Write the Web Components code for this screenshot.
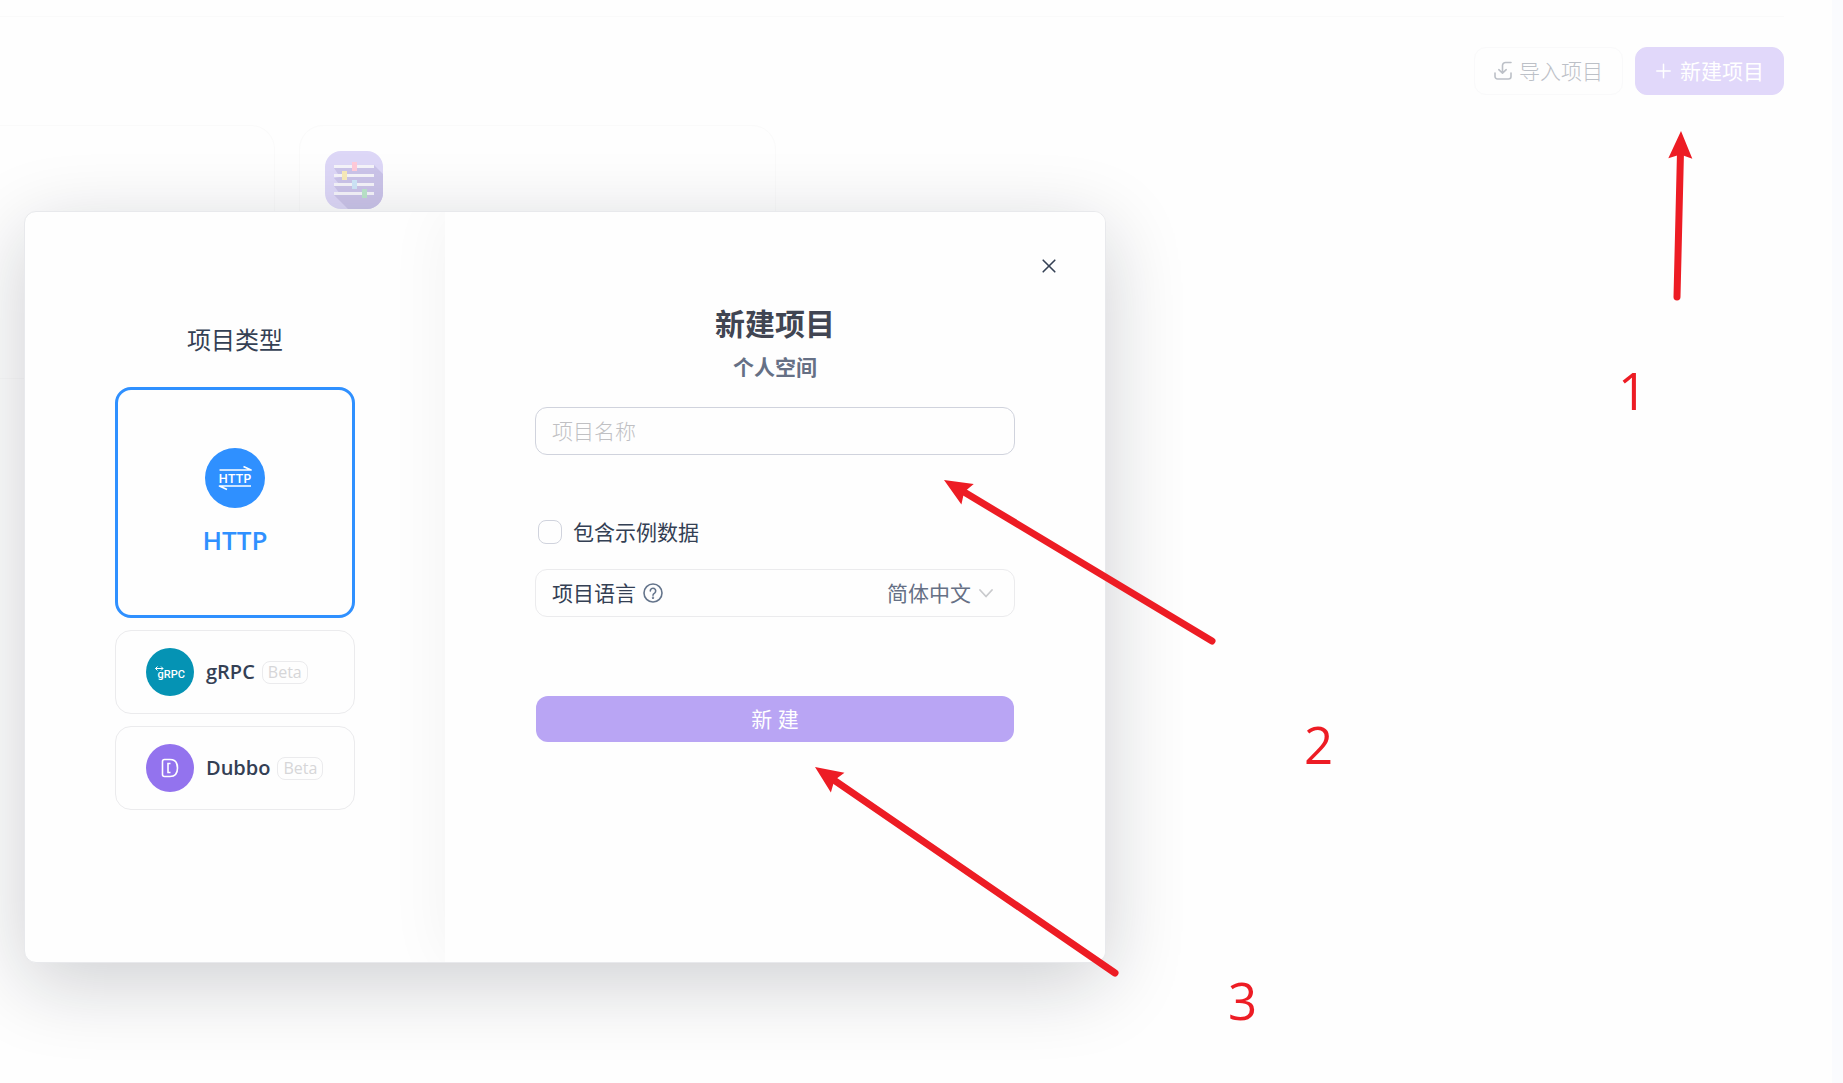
<!DOCTYPE html>
<html lang="zh-CN">
<head>
<meta charset="utf-8">
<title>新建项目</title>
<style>
  body {
    margin: 0;
    min-height: 100vh;
    background: #fefefe;
    color: #344054;
    font: 21px/30px "Open Sans", "Noto Sans CJK SC", sans-serif;
  }
</style>
</head>
<body>
<project-page>
  <tool-button slot="actions" kind="ghost">
    <svg slot="icon" width="18" height="20" viewBox="0 0 18 20" fill="none" stroke="currentColor" stroke-width="1.6" stroke-linecap="round" stroke-linejoin="round">
      <path d="M1 12v3.5A2.5 2.5 0 0 0 3.500 18h11a2.500 2.500 0 0 0 2.500-2.500V12"/>
      <path d="M17 1.500h-5.500a3 3 0 0 0-3 3V12M4.800 8.700l3.700 3.500 3.700-3.500"/>
    </svg>
    导入项目
  </tool-button>
  <tool-button slot="actions" kind="primary">
    <svg slot="icon" width="15" height="20" viewBox="0 0 15 20" fill="none" stroke="currentColor" stroke-width="1.500" stroke-linecap="round">
      <path d="M.8 10h13.400M7.500 3.300v13.400"/>
    </svg>
    新建项目
  </tool-button>
  <project-card></project-card>
  <project-card>
    <svg width="58" height="58" viewBox="0 0 58 58" role="img" aria-label="项目图标">
      <defs><clipPath id="tile"><rect width="58" height="58" rx="16"/></clipPath></defs>
      <g clip-path="url(#tile)">
        <rect width="58" height="58" fill="#ddd7f7"/>
        <path d="M49 14l9 9v35H23L9 44l6-1-6-8 6-1-6-7 6-1-6-9z" fill="#cbc4e9"/>
        <g fill="#f5f4fa">
          <rect x="9" y="14" width="40" height="3"/>
          <rect x="9" y="23" width="40" height="3"/>
          <rect x="9" y="32" width="40" height="3"/>
          <rect x="9" y="41" width="40" height="3"/>
        </g>
        <rect x="27" y="11" width="5" height="9" fill="#ffcad9"/>
        <rect x="17" y="20" width="5" height="9" fill="#f8eab9"/>
        <rect x="27" y="29" width="5" height="9" fill="#cfe6f8"/>
        <rect x="37" y="38" width="5" height="9" fill="#bce6cb"/>
      </g>
    </svg>
  </project-card>

  <new-project-dialog slot="dialog">
    <type-card slot="types" active>
      <svg slot="logo" width="60" height="60" viewBox="0 0 60 60">
        <circle cx="30" cy="30" r="30" fill="#2f90ff"/>
        <path d="M14.500 22h31.500l-7.500-3.500M46 38H14.500l7.500 3.500" fill="none" stroke="#fff" stroke-width="1.700" stroke-linejoin="round"/>
        <text x="30" y="34.500" text-anchor="middle" font-family="Inter" font-size="12" font-weight="600" fill="#fff">HTTP</text>
      </svg>
      HTTP
    </type-card>
    <type-card slot="types" tag="Beta">
      <svg slot="logo" width="48" height="48" viewBox="0 0 48 48">
        <circle cx="24" cy="24" r="24" fill="#0593b4"/>
        <path d="M9.500 20.500h7.500M11.500 18.500l-2 2 2 2M15 18.500l2 2-2 2" fill="none" stroke="#fff"/>
        <text x="11.500" y="30" font-family="Roboto" font-size="11" font-weight="500" fill="#fff">gRPC</text>
      </svg>
      gRPC
    </type-card>
    <type-card slot="types" tag="Beta">
      <svg slot="logo" width="48" height="48" viewBox="0 0 48 48">
        <circle cx="24" cy="24" r="24" fill="#9373ee"/>
        <path d="M18.500 15.500h5.500q7.500 0 7.500 8.500t-7.500 8.500h-5.500q-2 0-2-2v-13q0-2 2-2z" fill="none" stroke="#fff" stroke-width="1.600"/>
        <path d="M24.500 19.500h-2.500v9h2.500" fill="none" stroke="#fff" stroke-width="1.600"/>
      </svg>
      Dubbo
    </type-card>
  </new-project-dialog>

  <step-note slot="notes" tip="1681,131" tail="1677,297" at="1618,355">1</step-note>
  <step-note slot="notes" tip="944,480" tail="1212,641" at="1304,709">2</step-note>
  <step-note slot="notes" tip="815,767" tail="1115,973" at="1228,965">3</step-note>
</project-page>

<script>
/* Small base class: open shadow root with markup from view() */
class BaseElement extends HTMLElement {
  constructor() {
    super()
    this.attachShadow({ mode: 'open' })
  }

  connectedCallback() {
    this.shadowRoot.innerHTML = `
      <style>
        * { box-sizing: border-box; }
        ${this.getStyles()}
      </style>
      ${this.view()}
    `
  }
}

class ProjectPage extends BaseElement {
  view() {
    return `
      <main>
        <div class="toolbar"><slot name="actions"></slot></div>
        <div class="cards"><slot></slot></div>
      </main>
      <aside></aside>
      <div class="layer"><slot name="dialog"></slot></div>
      <slot name="notes"></slot>
    `
  }

  getStyles() {
    return `
      :host {
        display: flex;
        position: relative;
        min-height: 100vh;
        overflow: hidden;
      }

      main {
        flex: 1;
        padding: 16px 48px 0 0;
      }

      aside {
        width: 11px;
        background: #fafbfe;
      }

      .toolbar {
        display: flex;
        justify-content: flex-end;
        gap: 12px;
        padding: 30px 0;
        border-top: 1px solid #fafafa;
      }

      .cards {
        display: grid;
        grid-template-columns: 275px 477px;
        gap: 24px;
      }

      .layer {
        position: absolute;
        inset: 0;
        padding: 211px 24px 0;
      }
    `
  }
}

class ToolButton extends BaseElement {
  view() {
    return `
      <button type="button" class="${this.getAttribute('kind')}">
        <slot name="icon"></slot><span><slot></slot></span>
      </button>
    `
  }

  getStyles() {
    return `
      :host { display: block; }

      button {
        display: flex;
        align-items: center;
        gap: 7px;
        height: 48px;
        padding: 0 19px;
        border: 1px solid #f9f9fa;
        border-radius: 12px;
        background: transparent;
        color: #bcc0c7;
        font: inherit;
        font-weight: 300;
      }

      .primary {
        gap: 9px;
        padding: 0 19px 0 20px;
        border-color: #e1d8fa;
        background: #e1d8fa;
        color: #fff;
        font-weight: 400;
      }
    `
  }
}

class ProjectCard extends BaseElement {
  view() {
    return `<slot></slot>`
  }

  getStyles() {
    return `
      :host {
        display: block;
        box-sizing: border-box;
        height: 254px;
        padding: 25px;
        border: 1px solid #fafafa;
        border-radius: 24px;
      }

      /* the first card runs off the left edge of the window */
      :host(:first-of-type) {
        border-left: 0;
        border-top-left-radius: 0;
        border-bottom-left-radius: 0;
      }
    `
  }
}

class TypeCard extends BaseElement {
  view() {
    const tag = this.getAttribute('tag')
    return `
      <button type="button" aria-pressed="${this.hasAttribute('active')}">
        <slot name="logo"></slot>
        <span class="name"><slot></slot></span>
        ${tag ? `<span class="tag">${tag}</span>` : ''}
      </button>
    `
  }

  getStyles() {
    return `
      :host { display: block; }

      button {
        display: flex;
        align-items: center;
        width: 100%;
        height: 84px;
        padding: 0 30px;
        border: 1px solid #ebebed;
        border-radius: 16px;
        background: #fefefe;
        color: inherit;
        font: inherit;
        font-size: 20px;
        font-weight: 600;
      }

      .name { margin-left: 12px; }

      .tag {
        margin-left: 7px;
        padding: 0 5px;
        border: 1px solid #ebebed;
        border-radius: 8px;
        color: #d6d6d8;
        font-size: 16px;
        font-weight: 400;
        line-height: 21px;
      }

      :host([active]) button {
        flex-direction: column;
        justify-content: center;
        gap: 14px;
        height: 231px;
        border: 3px solid #2f90ff;
        color: #2f90ff;
        font-size: 26px;
        line-height: 36px;
      }

      :host([active]) .name { margin-left: 0; }
    `
  }
}

class NewProjectDialog extends BaseElement {
  view() {
    return `
      <section role="dialog" aria-labelledby="title">
        <div class="types">
          <h3>项目类型</h3>
          <slot name="types"></slot>
        </div>
        <form>
          <button type="button" class="close" aria-label="关闭">
            <svg width="14" height="14" viewBox="0 0 14 14" stroke="currentColor" stroke-width="1.6" stroke-linecap="round">
              <path d="M1.200 1.200l11.600 11.600M12.800 1.200L1.200 12.800"/>
            </svg>
          </button>
          <h2 id="title">新建项目</h2>
          <p>个人空间</p>
          <input class="field" type="text" aria-label="项目名称" placeholder="项目名称">
          <label class="check"><input type="checkbox">包含示例数据</label>
          <div class="field language">
            <label for="lang">项目语言</label>
            <svg width="20" height="20" viewBox="0 0 20 20" fill="none" stroke="#64748b" stroke-width="1.6" stroke-linecap="round">
              <circle cx="10" cy="10" r="9"/>
              <path d="M7.300 8a2.700 2.700 0 1 1 4.300 2.100Q10 11 10 12.200"/>
              <circle cx="10" cy="14.700" r=".4"/>
            </svg>
            <select id="lang"><option>简体中文</option></select>
            <svg width="14" height="20" viewBox="0 0 14 20" fill="none" stroke="#c9cacd" stroke-width="1.800" stroke-linecap="round" stroke-linejoin="round">
              <path d="M1 7l6 6.500L13 7"/>
            </svg>
          </div>
          <button type="submit" class="submit">新 建</button>
        </form>
      </section>
    `
  }

  getStyles() {
    return `
      :host { display: block; }

      section {
        display: grid;
        grid-template-columns: 7fr 11fr;
        max-width: 1082px;
        min-height: 752px;
        border: 1px solid #e8e9ec;
        border-radius: 12px;
        background: #fefefe;
        overflow: hidden;
        box-shadow: 0 20px 80px rgba(16, 20, 36, .2);
      }

      .types {
        display: flex;
        flex-direction: column;
        gap: 12px;
        padding: 112px 90px;
      }

      h3 {
        margin: 0 0 19px;
        font-size: 24px;
        font-weight: 400;
        line-height: 32px;
        text-align: center;
      }

      form {
        display: flex;
        flex-direction: column;
        padding: 38px 90px 37px;
        background: #fefefe;
        box-shadow: 0 0 60px rgba(0, 0, 0, .05);
      }

      .close {
        display: grid;
        place-items: center;
        align-self: flex-end;
        width: 32px;
        height: 32px;
        margin-right: -50px;
        padding: 0;
        border: 0;
        background: none;
        color: inherit;
      }

      h2 {
        margin: 22px 0 8px;
        color: #414552;
        font-size: 30px;
        font-weight: 700;
        line-height: 40px;
        text-align: center;
      }

      p {
        margin: 0 0 25px;
        color: #667085;
        font-weight: 700;
        text-align: center;
      }

      .field {
        width: 100%;
        height: 48px;
        padding: 0 16px;
        border: 1px solid #d0d3dd;
        border-radius: 12px;
        background: transparent;
        color: inherit;
        font: inherit;
      }

      .field::placeholder {
        color: #c0c0c3;
        font-weight: 300;
        opacity: 1;
      }

      .check {
        display: flex;
        align-items: center;
        gap: 11px;
        margin: 62px 0 22px 3px;
      }

      .check input {
        appearance: none;
        width: 24px;
        height: 24px;
        margin: 0;
        border: 1px solid #d0d3dd;
        border-radius: 8px;
      }

      .language {
        display: flex;
        align-items: center;
        padding-right: 21px;
        border-color: #ebebed;
      }

      .language label { margin-right: 7px; }

      select {
        appearance: none;
        margin: 0 8px 0 auto;
        padding: 0;
        border: 0;
        background: none;
        color: #667085;
        font: inherit;
      }

      .submit {
        height: 46px;
        margin: 79px 1px 0;
        border: 0;
        border-radius: 12px;
        background: #b9a5f4;
        color: #fff;
        font: inherit;
      }
    `
  }
}

/* Red arrow with a step number, placed freely over the page */
class StepNote extends BaseElement {
  point(name) {
    return this.getAttribute(name).split(',').map(Number)
  }

  view() {
    const [x, y] = this.point('tip')
    const [tx, ty] = this.point('tail')
    const length = Math.hypot(tx - x, ty - y)
    const angle = Math.atan2(ty - y, tx - x) * 180 / Math.PI
    return `
      <svg width="100%" height="100%" aria-hidden="true">
        <g transform="translate(${x} ${y}) rotate(${angle})">
          <path d="M20 0H${length}" stroke="#ed1c24" stroke-width="7" stroke-linecap="round"/>
          <path d="M0 0L27.500-12 23.500 0 27.500 12z" fill="#ed1c24"/>
        </g>
      </svg>
      <span><slot></slot></span>
    `
  }

  getStyles() {
    const [left, top] = this.point('at')
    return `
      :host {
        position: absolute;
        inset: 0;
        pointer-events: none;
        color: #ed1c24;
      }

      svg { position: absolute; }

      span {
        position: absolute;
        left: ${left}px;
        top: ${top}px;
        font-size: 51px;
        line-height: 70px;
      }
    `
  }
}

customElements.define('project-page', ProjectPage)
customElements.define('tool-button', ToolButton)
customElements.define('project-card', ProjectCard)
customElements.define('type-card', TypeCard)
customElements.define('new-project-dialog', NewProjectDialog)
customElements.define('step-note', StepNote)
</script>
</body>
</html>
